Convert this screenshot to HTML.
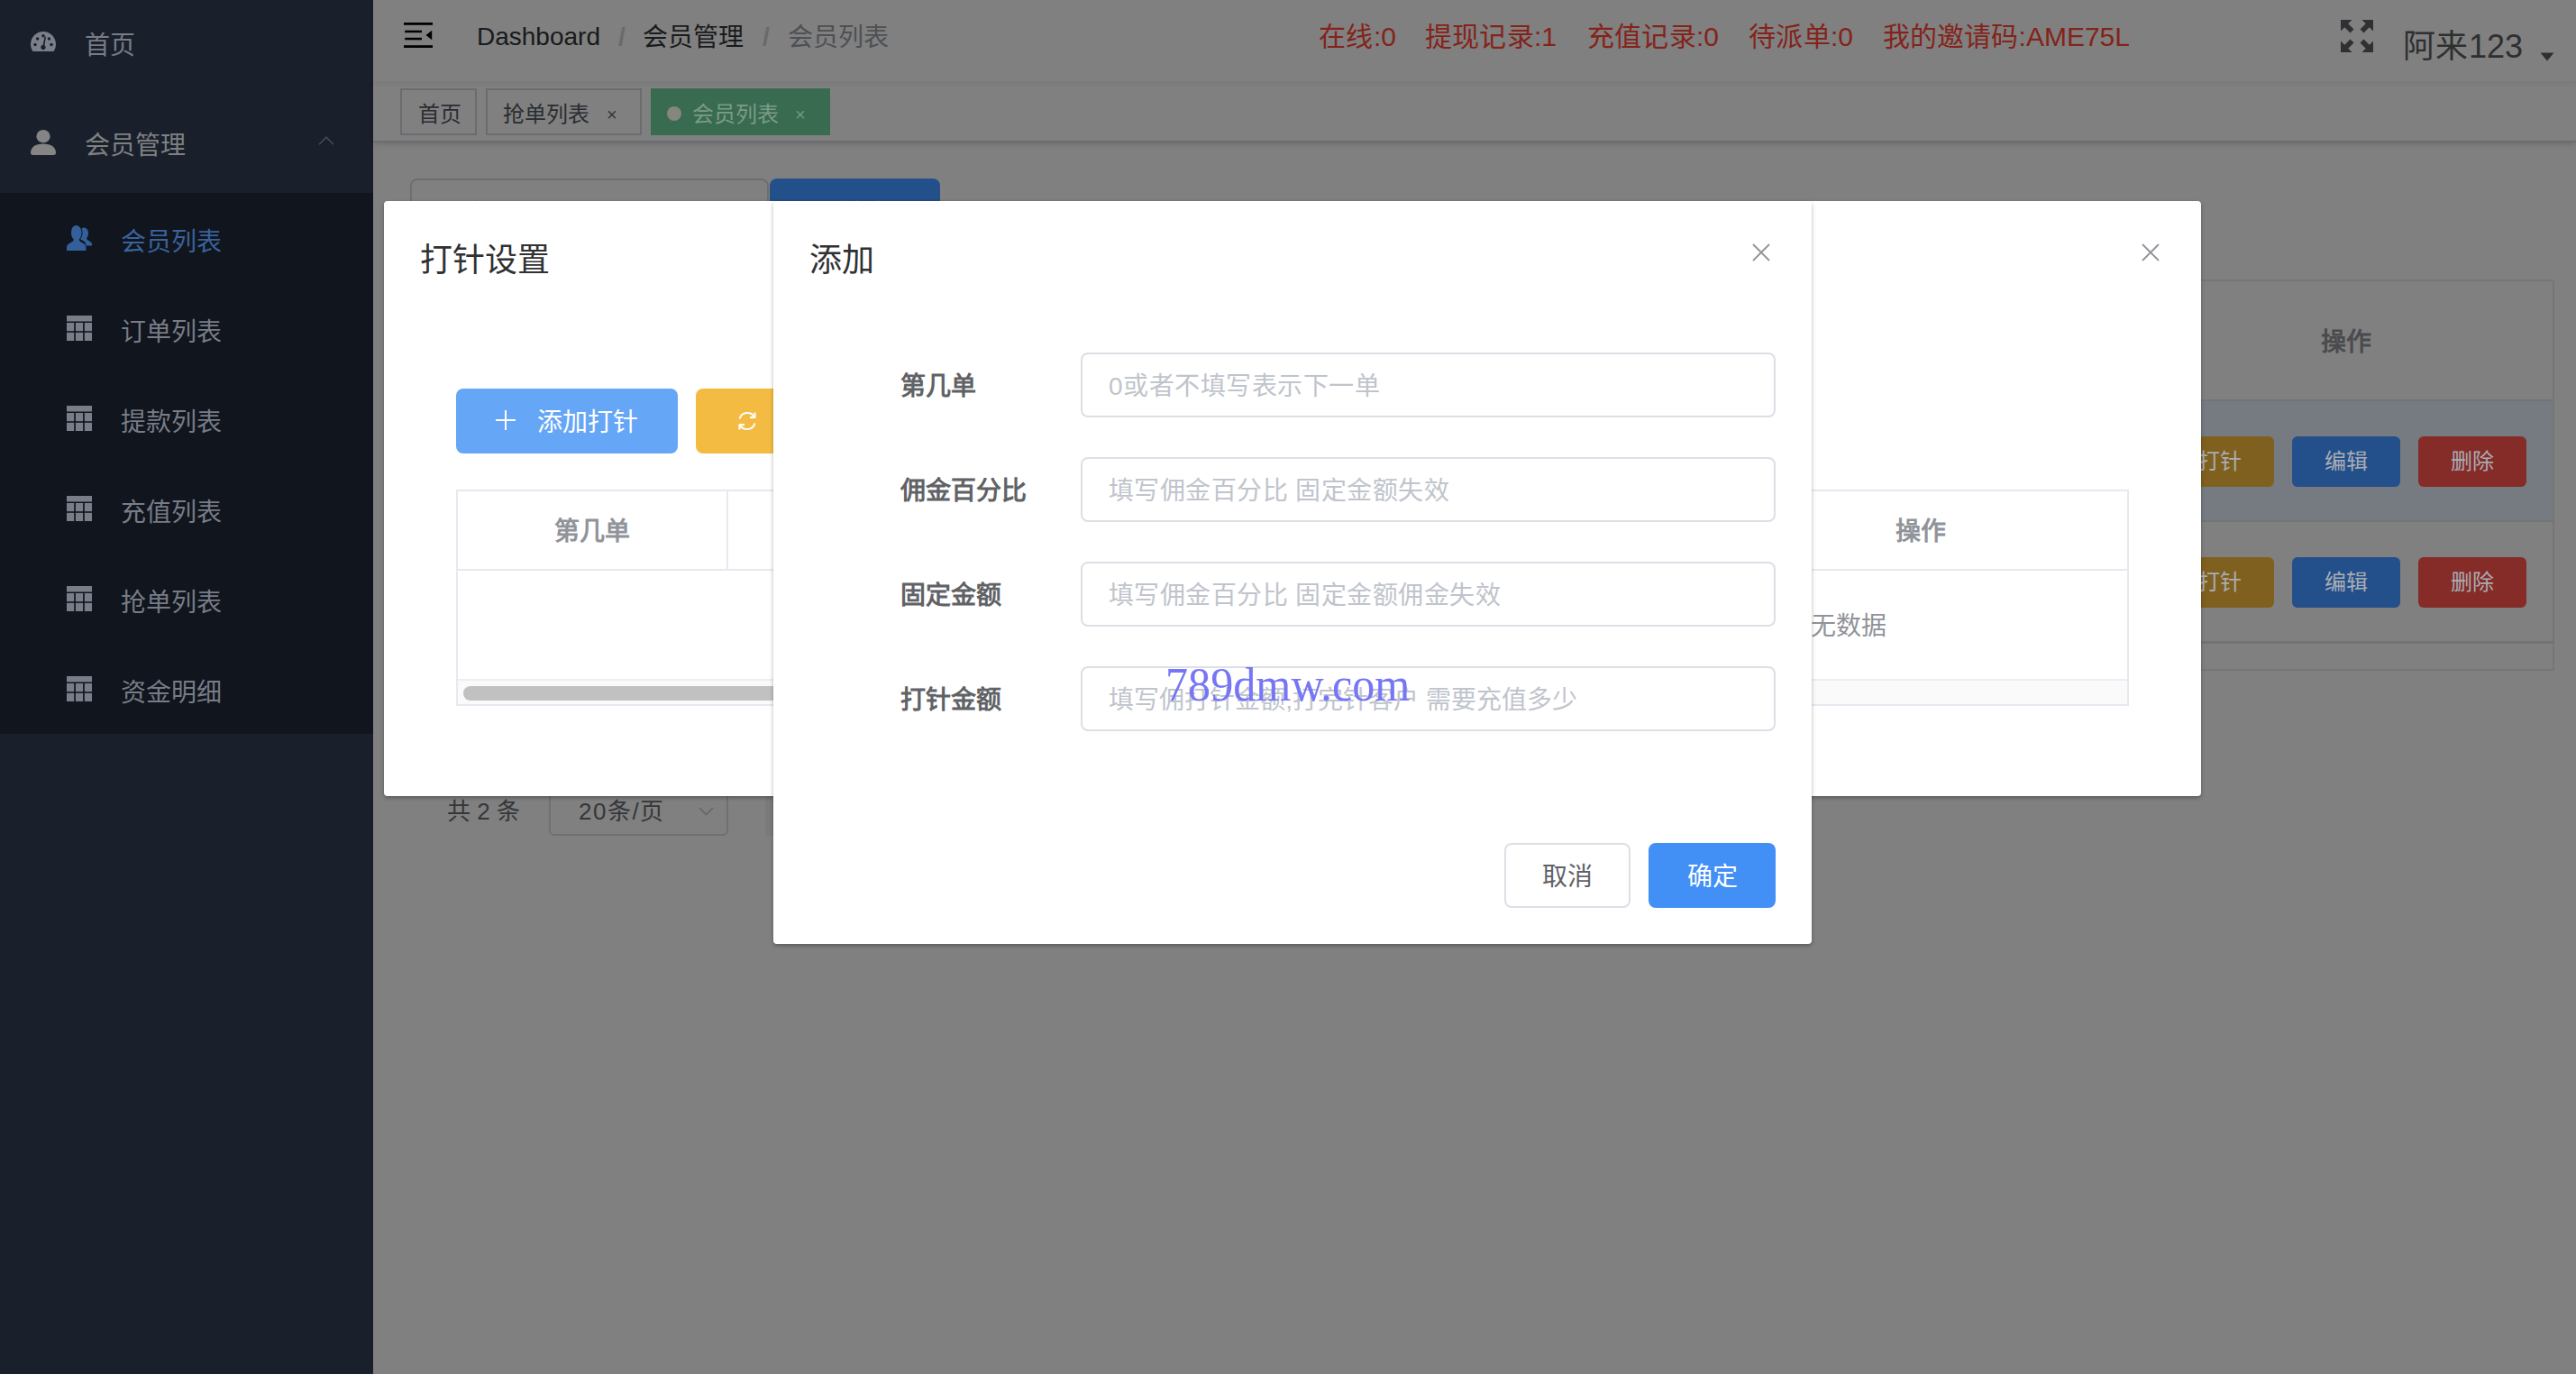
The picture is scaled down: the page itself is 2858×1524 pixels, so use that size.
<!DOCTYPE html>
<html lang="zh-CN">
<head>
<meta charset="utf-8">
<title>会员列表</title>
<style>
*{box-sizing:border-box;margin:0;padding:0}
html,body{width:2858px;height:1524px;overflow:hidden;background:#808080}
body{position:relative;font-family:"Liberation Sans",sans-serif;font-size:28px;color:#303133}
.abs,.abs>*{position:absolute}
.t{position:absolute;white-space:nowrap;overflow:visible;height:40px;line-height:40px;text-align-last:justify}
svg{position:absolute;display:block;overflow:visible}

/* ---------- sidebar ---------- */
#sidebar{left:0;top:0;width:414px;height:1524px;background:#1a202b;overflow:hidden}
#submenu{left:0;top:214px;width:414px;height:600px;background:#10151e}
#sidebar .t{color:#787c86;font-size:28px}
#sidebar .t.on{color:#3a629b}

/* ---------- navbar ---------- */
#navbar{left:414px;top:0;width:2444px;height:90px;background:#808080;box-shadow:0 2px 5px rgba(0,21,41,.08);z-index:2}
#navbar .bc{font-size:28px;color:#191a1b;top:20px}
#navbar .sep{font-size:28px;color:#696a6d;font-weight:700;top:21px}
#navbar .red{font-size:30px;color:#84231a;top:21px}
#navbar .user{font-size:36px;color:#2e2f31;top:29px;height:46px;line-height:46px}

/* ---------- tags ---------- */
#tags{left:414px;top:90px;width:2444px;height:68px;background:#808080;border-bottom:2px solid #6c6d70;box-shadow:0 2px 6px rgba(0,0,0,.12),0 0 6px rgba(0,0,0,.04);z-index:1}
.tag{position:absolute;top:8px;height:52px;border:2px solid #6b6c6f;font-size:24px;color:#2a2c32}
.tag .t{top:7px;font-size:24px}
.tag.act{background:#386b50;border-color:#386b50;color:#7d9a88}

/* ---------- page behind ---------- */
#page{left:414px;top:156px;width:2444px;height:1368px}
.dimbtn{position:absolute;height:56px;width:120px;border-radius:6px;font-size:24px;color:#a9adb3;text-align:center;line-height:56px}

/* ---------- dialogs ---------- */
.dlg{position:absolute;background:#fff;border-radius:4px;box-shadow:0 2px 4px rgba(0,0,0,.3)}
.dlg>.in{left:0;top:-1px;width:100%;height:100%}
.dlg .title{font-size:36px;color:#303133;height:48px;line-height:48px}
.btn{position:absolute;border-radius:8px;font-size:28px;text-align:center}
.inp{position:absolute;left:341px;width:771px;height:72px;border:2px solid #dcdfe6;border-radius:8px;background:#fff}
.inp .t{left:29px;top:16px;color:#c0c4cc;font-size:28px;letter-spacing:.45px}
.lab{position:absolute;left:141px;text-align-last:justify;font-weight:700;color:#606266;font-size:28px;white-space:nowrap;height:40px;line-height:40px}
.th{position:absolute;font-weight:700;color:#909399;font-size:28px;white-space:nowrap;height:40px;line-height:40px;text-align:center}
</style>
</head>
<body>

<!-- ======================= SIDEBAR ======================= -->
<div id="sidebar" class="abs">
  <div id="submenu"></div>

  <!-- 首页 -->
  <svg style="left:34px;top:35px" width="28" height="22" viewBox="0 0 28 22"><path fill="#7a7f8a" d="M14 0C6.3 0 0 6.3 0 14c0 2.7.8 5.300 2.100 7.400.2.400.6.600 1 .600h21.800c.4 0 .8-.2 1-.6C27.200 19.300 28 16.700 28 14 28 6.300 21.700 0 14 0z"/><g fill="#1a202b"><circle cx="5" cy="14.500" r="1.700"/><circle cx="7.600" cy="8" r="1.700"/><circle cx="14" cy="4.700" r="1.700"/><circle cx="20.400" cy="8" r="1.700"/><circle cx="23" cy="14.500" r="1.700"/><path d="M15.600 5.500l-1.900 9.300a2.700 2.700 0 1 0 1.700.4l1.600-9.400z"/></g></svg>
  <div class="t" style="left:94px;top:31px;width:56px">首页</div>

  <!-- 会员管理 -->
  <svg style="left:34px;top:144px" width="28" height="28" viewBox="0 0 28 28"><g fill="#858585"><ellipse cx="14" cy="7.200" rx="7.600" ry="7.200"/><path d="M0 25.500C0 19.500 5 15.500 14 15.500s14 4 14 10c0 1.500-1 2.500-2.500 2.500h-23C1 28 0 27 0 25.500z"/></g></svg>
  <div class="t" style="left:94px;top:142px;color:#7f8082;width:112px">会员管理</div>
  <svg style="left:353px;top:151px" width="18" height="10" viewBox="0 0 18 10"><path d="M1 9.200L9 1.200l8 8" fill="none" stroke="#454954" stroke-width="1.600"/></svg>

  <!-- 会员列表 (active) -->
  <svg style="left:74px;top:250px" width="28" height="28" viewBox="0 0 28 28"><g fill="#335f9b"><path d="M19.500 2.500c2.600 0 4.500 2.600 4.500 6.300 0 2.300-.8 4.300-2 5.500.2 1.500 1.600 2.300 3.300 3.100 1.700.8 2.700 2 2.700 3.600v1.500h-6.500c0-2.700-1.200-4.600-3.800-5.800-1.300-.6-2.200-1.100-2.500-1.800 1.500-1.700 2.300-4 2.300-6.600 0-1.800-.4-3.500-1.100-4.800.8-.6 1.900-1 3.100-1z"/><path d="M10.500 0C14 0 16.500 3.400 16.500 8.300c0 3.100-1.100 5.800-2.800 7.300.3 2 2.100 3 4.400 4.100 2.200 1 3.400 2.600 3.400 4.800V28H0v-3.500c0-2.200 1.200-3.800 3.400-4.800 2.300-1.100 4.100-2.100 4.400-4.100C6.100 14.100 5 11.400 5 8.300 5 3.400 7 0 10.500 0z"/></g></svg>
  <div class="t on" style="left:134px;top:249px;width:112px">会员列表</div>
  <!-- 订单列表 -->
  <svg style="left:74px;top:350px" width="28" height="28" viewBox="0 0 28 28"><g fill="#797d88"><rect x="0" y="0" width="28" height="6.500"/><rect x="0" y="8" width="8.200" height="9.200"/><rect x="9.900" y="8" width="8.200" height="9.200"/><rect x="19.800" y="8" width="8.200" height="9.200"/><rect x="0" y="18.800" width="8.200" height="9.200"/><rect x="9.900" y="18.800" width="8.200" height="9.200"/><rect x="19.800" y="18.800" width="8.200" height="9.200"/></g></svg>
  <div class="t" style="left:134px;top:349px;width:112px">订单列表</div>
  <!-- 提款列表 -->
  <svg style="left:74px;top:450px" width="28" height="28" viewBox="0 0 28 28"><g fill="#797d88"><rect x="0" y="0" width="28" height="6.500"/><rect x="0" y="8" width="8.200" height="9.200"/><rect x="9.900" y="8" width="8.200" height="9.200"/><rect x="19.800" y="8" width="8.200" height="9.200"/><rect x="0" y="18.800" width="8.200" height="9.200"/><rect x="9.900" y="18.800" width="8.200" height="9.200"/><rect x="19.800" y="18.800" width="8.200" height="9.200"/></g></svg>
  <div class="t" style="left:134px;top:449px;width:112px">提款列表</div>
  <!-- 充值列表 -->
  <svg style="left:74px;top:550px" width="28" height="28" viewBox="0 0 28 28"><g fill="#797d88"><rect x="0" y="0" width="28" height="6.500"/><rect x="0" y="8" width="8.200" height="9.200"/><rect x="9.900" y="8" width="8.200" height="9.200"/><rect x="19.800" y="8" width="8.200" height="9.200"/><rect x="0" y="18.800" width="8.200" height="9.200"/><rect x="9.900" y="18.800" width="8.200" height="9.200"/><rect x="19.800" y="18.800" width="8.200" height="9.200"/></g></svg>
  <div class="t" style="left:134px;top:549px;width:112px">充值列表</div>
  <!-- 抢单列表 -->
  <svg style="left:74px;top:650px" width="28" height="28" viewBox="0 0 28 28"><g fill="#797d88"><rect x="0" y="0" width="28" height="6.500"/><rect x="0" y="8" width="8.200" height="9.200"/><rect x="9.900" y="8" width="8.200" height="9.200"/><rect x="19.800" y="8" width="8.200" height="9.200"/><rect x="0" y="18.800" width="8.200" height="9.200"/><rect x="9.900" y="18.800" width="8.200" height="9.200"/><rect x="19.800" y="18.800" width="8.200" height="9.200"/></g></svg>
  <div class="t" style="left:134px;top:649px;width:112px">抢单列表</div>
  <!-- 资金明细 -->
  <svg style="left:74px;top:750px" width="28" height="28" viewBox="0 0 28 28"><g fill="#797d88"><rect x="0" y="0" width="28" height="6.500"/><rect x="0" y="8" width="8.200" height="9.200"/><rect x="9.900" y="8" width="8.200" height="9.200"/><rect x="19.800" y="8" width="8.200" height="9.200"/><rect x="0" y="18.800" width="8.200" height="9.200"/><rect x="9.900" y="18.800" width="8.200" height="9.200"/><rect x="19.800" y="18.800" width="8.200" height="9.200"/></g></svg>
  <div class="t" style="left:134px;top:749px;width:112px">资金明细</div>
</div>

<!-- ======================= NAVBAR ======================= -->
<div id="navbar" class="abs">
  <svg style="left:34px;top:25px" width="32" height="28" viewBox="0 0 32 28"><g fill="#000"><rect x="0" y="0" width="32" height="2.800"/><rect x="1.200" y="8.700" width="18.800" height="2.500"/><rect x="1.200" y="16.800" width="18.800" height="2.500"/><rect x="0" y="25.200" width="32" height="2.800"/><path d="M24.500 14l6.700-5.200v10.400z"/></g></svg>
  <div class="t bc" style="left:115px;top:21px">Dashboard</div>
  <div class="t sep" style="left:272px">/</div>
  <div class="t bc" style="left:299px;top:22px;width:112px">会员管理</div>
  <div class="t sep" style="left:432px">/</div>
  <div class="t bc" style="left:460px;top:22px;color:#4d5054;width:112px">会员列表</div>

  <div class="t red" style="left:1049px;width:86px">在线:0</div>
  <div class="t red" style="left:1167px;width:146px">提现记录:1</div>
  <div class="t red" style="left:1347px;width:146px">充值记录:0</div>
  <div class="t red" style="left:1526px;width:116px">待派单:0</div>
  <div class="t red" style="left:1675px;width:274px">我的邀请码:AME75L</div>

  <svg style="left:2183px;top:22px" width="36" height="36" viewBox="0 0 36 36"><g fill="#2f3033"><path d="M0 0L12.5 0L0 12.5z"/><path d="M3.5 7.5L7.5 3.5L14.5 10.5L10.5 14.5z"/><path d="M36 0L23.5 0L36 12.5z"/><path d="M32.5 7.5L28.5 3.5L21.5 10.5L25.5 14.5z"/><path d="M0 36L12.5 36L0 23.5z"/><path d="M3.5 28.5L7.5 32.5L14.5 25.5L10.5 21.5z"/><path d="M36 36L23.5 36L36 23.5z"/><path d="M32.5 28.5L28.5 32.5L21.5 25.5L25.5 21.5z"/></g></svg>
  <div class="t user" style="left:2252px;width:133px">阿来123</div>
  <svg style="left:2404px;top:58px" width="16" height="10" viewBox="0 0 16 10"><path d="M0.500 0.500h15L8 9.500z" fill="#2e2f31"/></svg>
</div>

<!-- ======================= TAGS VIEW ======================= -->
<div id="tags" class="abs">
  <div class="tag" style="left:30px;width:85px"><div class="t" style="left:18px;width:48px">首页</div></div>
  <div class="tag" style="left:125px;width:173px"><div class="t" style="left:17px;width:96px">抢单列表</div><div class="t" style="left:132px;font-size:20px;color:#34363b">×</div></div>
  <div class="tag act" style="left:308px;width:199px"><span style="position:absolute;left:16px;top:18px;width:16px;height:16px;border-radius:50%;background:#85867f"></span><div class="t" style="left:44px;width:96px">会员列表</div><div class="t" style="left:158px;font-size:20px;color:#6e9a82">×</div></div>
</div>

<!-- ======================= PAGE BEHIND (dimmed) ======================= -->
<div id="page" class="abs">
  <!-- search -->
  <div style="left:41px;top:42px;width:398px;height:72px;border:2px solid #6c6e72;border-radius:8px"></div>
  <div class="t" style="left:72px;top:62px;color:#5f6166;width:112px">用户账号</div>
  <div style="left:440px;top:42px;width:189px;height:72px;background:#23508a;border-radius:8px"></div>
  <svg style="left:488px;top:66px" width="26" height="26" viewBox="0 0 26 26"><g fill="none" stroke="#808080" stroke-width="2.200"><circle cx="10.500" cy="10.500" r="8.500"/><path d="M17 17l7.500 7.500"/></g></svg>
  <div class="t" style="left:518px;top:62px;color:#808080;width:56px">搜索</div>

  <!-- table -->
  <div style="left:41px;top:154px;width:2379px;height:434px;border:2px solid #747679"></div>
  <div style="left:41px;top:287px;width:2379px;height:2px;background:#727477"></div>
  <div style="left:43px;top:289px;width:2375px;height:133px;background:#767b81"></div>
  <div style="left:41px;top:421px;width:2379px;height:2px;background:#727477"></div>
  <div style="left:41px;top:555px;width:2379px;height:3px;background:#717274"></div>
  <div class="th" style="left:2129px;top:204px;width:120px;color:#4a4b4e">操作</div>

  <div class="dimbtn" style="left:1989px;top:328px;background:#80601f">打针</div>
  <div class="dimbtn" style="left:2129px;top:328px;background:#234f8b">编辑</div>
  <div class="dimbtn" style="left:2269px;top:328px;background:#862c28">删除</div>
  <div class="dimbtn" style="left:1989px;top:462px;background:#80601f">打针</div>
  <div class="dimbtn" style="left:2129px;top:462px;background:#234f8b">编辑</div>
  <div class="dimbtn" style="left:2269px;top:462px;background:#862c28">删除</div>

  <!-- pagination -->
  <div class="t" style="left:82px;top:724px;font-size:26px;color:#35363a;width:81px">共 2 条</div>
  <div style="left:195px;top:715px;width:199px;height:56px;border:2px solid #6e7074;border-radius:6px"></div>
  <div class="t" style="left:228px;top:724px;font-size:26px;letter-spacing:1.5px;color:#35363a;width:95px">20条/页</div>
  <svg style="left:361px;top:739px" width="17" height="10" viewBox="0 0 17 10"><path d="M1 1l7.500 7.500L16 1" fill="none" stroke="#64666a" stroke-width="1.600"/></svg>
  <div style="left:435px;top:715px;width:60px;height:56px;background:#7a7a7b;border-radius:4px"></div>
</div>

<!-- ======================= OUTER DIALOG 打针设置 ======================= -->
<div class="dlg abs" id="dlg1" style="left:426px;top:223px;width:2016px;height:660px"><div class="in abs">
  <div class="t title" style="left:40px;top:43px;width:144px">打针设置</div>
  <svg style="left:1950px;top:48px" width="20" height="20" viewBox="0 0 20 20"><path d="M1 1l18 18M19 1L1 19" stroke="#909399" stroke-width="1.800" fill="none"/></svg>

  <div class="btn" style="left:80px;top:209px;width:246px;height:72px;background:#65a6f6"></div>
  <svg style="left:123px;top:232px" width="24" height="24" viewBox="0 0 24 24"><path d="M12 1v22M1 12h22" stroke="#fff" stroke-width="2" fill="none"/></svg>
  <div class="t" style="left:170px;top:227px;color:#fff;width:112px">添加打针</div>
  <div class="btn" style="left:346px;top:209px;width:120px;height:72px;background:#f4bb42"></div>
  <svg style="left:391px;top:233px" width="24" height="24" viewBox="0 0 24 24"><g fill="none" stroke="#fff" stroke-width="2"><path d="M3.500 9.500A9 9 0 0 1 20 7.500M20.500 14.500A9 9 0 0 1 4 16.500"/><path d="M20.500 2.500v5.500h-5.500M3.500 21.500V16H9"/></g></svg>

  <!-- table -->
  <div style="left:80px;top:321px;width:1856px;height:240px;border:2px solid #e6e9f0"></div>
  <div style="left:80px;top:409px;width:1856px;height:2px;background:#e6e9f0"></div>
  <div style="left:380px;top:323px;width:2px;height:86px;background:#e6e9f0"></div>
  <div class="th" style="left:82px;top:348px;width:298px">第几单</div>
  <div class="th" style="left:1605px;top:348px;width:200px">操作</div>
  <div class="t" style="left:1555px;top:453px;color:#909399;width:112px">暂无数据</div>
  <div style="left:82px;top:531px;width:1852px;height:28px;background:#fafafa;border-top:2px solid #ebeef5"></div>
  <div style="left:88px;top:539px;width:1380px;height:16px;background:#c1c1c1;border-radius:8px"></div>
</div></div>

<!-- ======================= INNER DIALOG 添加 ======================= -->
<div class="dlg abs" id="dlg2" style="left:858px;top:223px;width:1152px;height:824px"><div class="in abs">
  <div class="t title" style="left:40px;top:43px;width:72px">添加</div>
  <svg style="left:1086px;top:48px" width="20" height="20" viewBox="0 0 20 20"><path d="M1 1l18 18M19 1L1 19" stroke="#909399" stroke-width="1.800" fill="none"/></svg>

  <div class="lab" style="top:187px;width:84px">第几单</div>
  <div class="inp" style="top:169px"><div class="t" style="width:301px">0或者不填写表示下一单</div></div>
  <div class="lab" style="top:303px;width:140px">佣金百分比</div>
  <div class="inp" style="top:285px"><div class="t" style="width:378px">填写佣金百分比 固定金额失效</div></div>
  <div class="lab" style="top:419px;width:112px">固定金额</div>
  <div class="inp" style="top:401px"><div class="t" style="width:435px">填写佣金百分比 固定金额佣金失效</div></div>
  <div class="lab" style="top:535px;width:112px">打针金额</div>
  <div class="inp" style="top:517px"><div class="t" style="letter-spacing:0;width:520px">填写佣打针金额,打完针客户 需要充值多少</div></div>

  <div class="t" style="left:435px;top:508px;height:60px;line-height:60px;font-family:'Liberation Serif',serif;font-size:52px;color:#7676f6;letter-spacing:0;transform:scaleX(.965);transform-origin:0 0">789dmw.com</div>

  <div class="btn" style="left:811px;top:713px;width:140px;height:72px;border:2px solid #dcdfe6;background:#fff"></div>
  <div class="t" style="left:811px;top:731px;width:140px;text-align:center;text-align-last:center;color:#606266">取消</div>
  <div class="btn" style="left:971px;top:713px;width:141px;height:72px;background:#428ff6"></div>
  <div class="t" style="left:971px;top:731px;width:141px;text-align:center;text-align-last:center;color:#fff">确定</div>
</div></div>

</body>
</html>
